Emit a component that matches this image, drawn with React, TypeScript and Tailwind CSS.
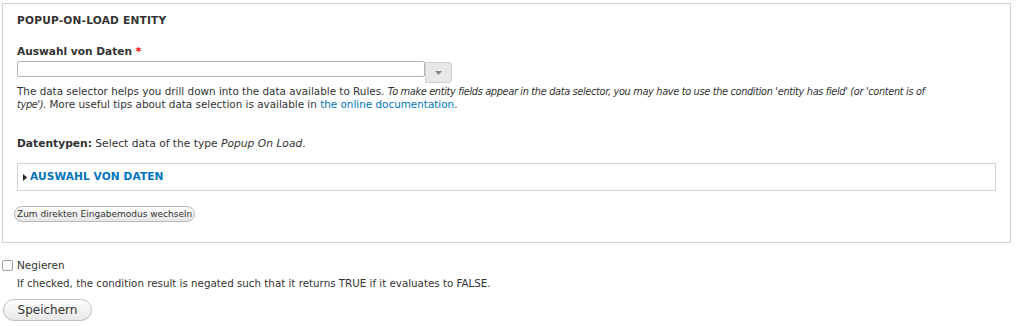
export default function App() {
  return (
    <div className="w-[1024px] h-[326px] bg-white text-[#333] font-['DejaVu_Sans',sans-serif] pt-[3px] overflow-hidden">
      <fieldset className="ml-[2px] w-[1005px] h-[240px] border border-[#d0d0d0] px-[14px] pt-[8px]">
        <div className="text-[10.6px] font-bold leading-[16px] tracking-[0.2px] text-[#333]">POPUP-ON-LOAD ENTITY</div>

        <div className="mt-[15px] text-[10.6px] font-bold leading-[16px]">
          Auswahl von Daten <span className="text-[#e00]">*</span>
        </div>
        <div className="mt-[2px] flex items-start">
          <input
            type="text"
            className="w-[408px] h-[16px] border border-[#b4b4b4] rounded-[2px] bg-white"
          />
          <button className="w-[27px] h-[21px] mt-[1px] bg-[#e8e8e8] border border-[#cfcfcf] rounded-r-[3px] flex items-center justify-center">
            <svg width="7" height="4" viewBox="0 0 7 4">
              <path d="M0 0h7L3.5 4z" fill="#888" />
            </svg>
          </button>
        </div>
        <p className="mt-[2px] text-[10.4px] leading-[12px] text-[#333]">
          <span className="whitespace-nowrap">
            The data selector helps you drill down into the data available to Rules.{' '}
            <em className="text-[9.8px] tracking-[-0.35px]">
              To make entity fields appear in the data selector, you may have to use the condition 'entity has field' (or 'content is of
            </em>
          </span>
          <br />
          <em className="text-[9.8px] tracking-[-0.35px]">type').</em> More useful tips about data selection is available in{' '}
          <a className="text-[#0074bd]">the online documentation</a>.
        </p>

        <div className="mt-[25px] text-[10.7px] leading-[16px]">
          <span className="font-bold">Datentypen:</span> Select data of the type <em>Popup On Load</em>.
        </div>

        <div className="mt-[11px] w-[979px] h-[28px] border border-[#d4d4d4] flex items-center pl-[5px]">
          <svg width="4" height="7" viewBox="0 0 4 7" className="mr-[3px]">
            <path d="M0 0v7l4-3.5z" fill="#222" />
          </svg>
          <span className="text-[10.6px] font-bold text-[#0074bd] tracking-[0.1px]">AUSWAHL VON DATEN</span>
        </div>

        <button className="mt-[15px] -ml-[3px] h-[16px] px-[2px] rounded-full border border-[#b8b8b8] bg-gradient-to-b from-white to-[#e6e6e6] text-[9px] leading-[14px] text-[#333]">
          Zum direkten Eingabemodus wechseln
        </button>
      </fieldset>

      <div className="mt-[15px] flex items-center">
        <span className="ml-[2px] w-[11px] h-[11px] border border-[#a0a0a0] rounded-[2px] bg-white" />
        <span className="ml-[4px] text-[10.5px] leading-[14px]">Negieren</span>
      </div>
      <div className="ml-[17px] mt-[4px] text-[10.3px] leading-[14px] text-[#333]">
        If checked, the condition result is negated such that it returns TRUE if it evaluates to FALSE.
      </div>
      <button className="ml-[3px] mt-[9px] w-[89px] h-[22px] rounded-full border border-[#c0c0c0] bg-gradient-to-b from-white to-[#e8e8e8] text-[12px] text-[#333]">
        Speichern
      </button>
    </div>
  );
}
